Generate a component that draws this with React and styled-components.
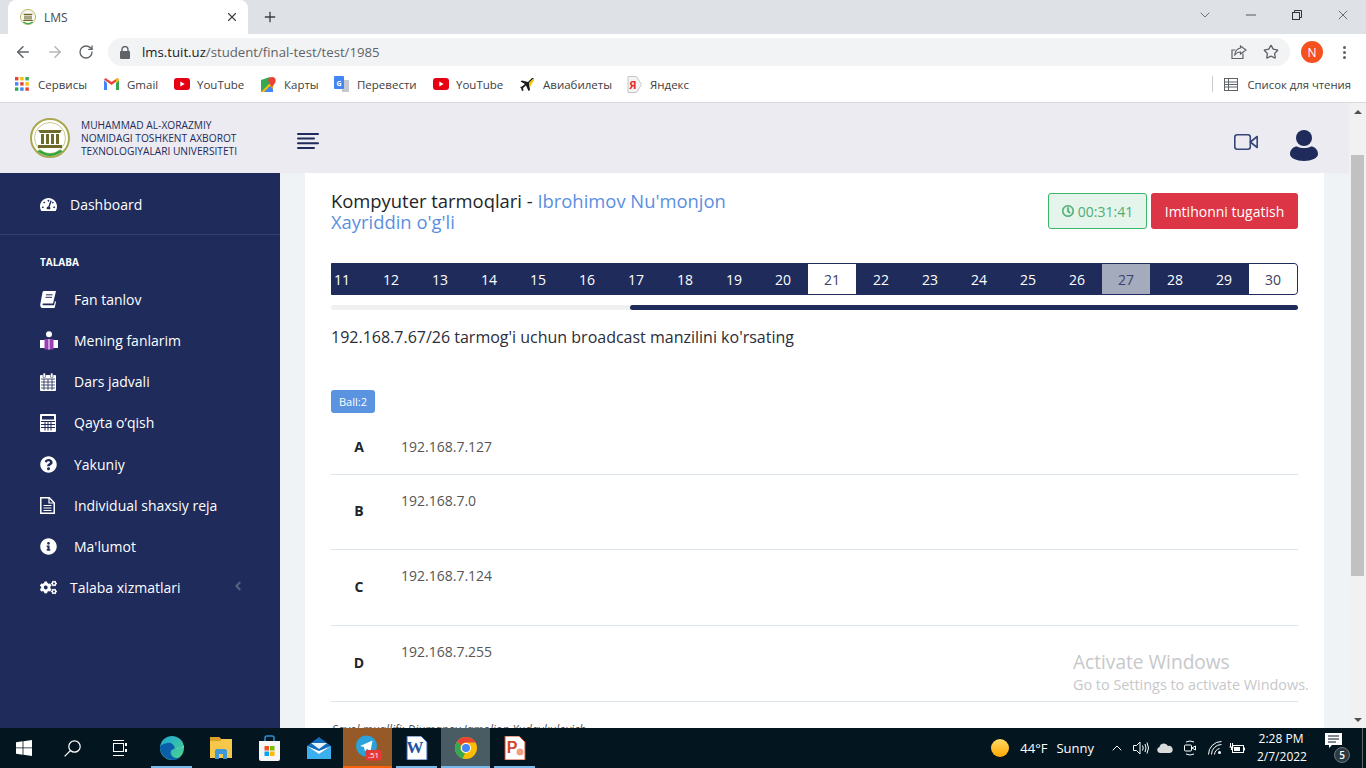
import React from "react";
import styled, { createGlobalStyle } from "styled-components";
import { FaTachometerAlt, FaQuestionCircle, FaInfoCircle, FaCogs, FaRegClock, FaAngleLeft } from "react-icons/fa";
import { ArrowLeft, ArrowRight, RotateCw, Star, X, Plus, Minus, ChevronDown, ChevronUp } from "lucide-react";

const navy = "#1e2b5b";

const GlobalStyle = createGlobalStyle`
  html, body {
    margin: 0;
    padding: 0;
    height: 768px;
    overflow: hidden;
    font-family: "Open Sans", "Noto Sans", sans-serif;
  }
  * {
    box-sizing: border-box;
  }
`;

const Screen = styled.div`
  width: 1366px;
  height: 768px;
  display: flex;
  flex-direction: column;
  position: relative;
  overflow: hidden;
  background: #fff;
`;

/* browser chrome */
const TabStrip = styled.div`
  height: 34px;
  flex: none;
  background: #dee1e6;
  display: flex;
  align-items: flex-end;
  padding-left: 8px;
  color: #3c4043;
`;

const Tab = styled.div`
  width: 240px;
  height: 34px;
  background: #fff;
  border-radius: 8px 8px 0 0;
  display: flex;
  align-items: center;
  padding: 0 9px 0 12px;
  font-size: 12px;
  gap: 8px;
`;

const TabTitle = styled.span`
  flex: 1;
  color: #45494d;
`;

const NewTab = styled.div`
  width: 44px;
  height: 34px;
  display: flex;
  align-items: center;
  justify-content: center;
`;

const WindowControls = styled.div`
  margin-left: auto;
  height: 34px;
  padding-bottom: 5px;
  display: flex;
  align-items: center;
  color: #333;
`;

const WindowButton = styled.div`
  width: 46px;
  display: flex;
  justify-content: center;
`;

const Toolbar = styled.div`
  height: 34px;
  flex: none;
  background: #fff;
  display: flex;
  align-items: center;
  padding: 2px 0 0 14px;
  color: #5f6368;
`;

const NavButton = styled.div`
  width: ${(p) => p.$width || 32}px;
  display: flex;
  color: ${(p) => p.$color || "#5f6368"};
`;

const Omnibox = styled.div`
  width: 1182px;
  height: 28px;
  background: #f1f3f4;
  border-radius: 14px;
  display: flex;
  align-items: center;
  padding: 0 11px 0 12px;
  font-size: 13.2px;
`;

const Url = styled.span`
  margin-left: 12px;
  color: #5f6368;
  flex: 1;
  b {
    font-weight: 400;
    color: #202124;
  }
`;

const OmniIcons = styled.div`
  display: flex;
  align-items: center;
  gap: 16px;
`;

const Avatar = styled.div`
  width: 22px;
  height: 22px;
  margin-left: 11px;
  border-radius: 50%;
  background: #f4511e;
  color: #fff;
  font-size: 12px;
  display: flex;
  align-items: center;
  justify-content: center;
`;

const Dots = styled.div`
  margin-left: 20px;
  display: flex;
  flex-direction: column;
  gap: 2px;
  i {
    width: 3px;
    height: 3px;
    border-radius: 50%;
    background: #5f6368;
  }
`;

const BookmarksBar = styled.div`
  height: 35px;
  flex: none;
  background: #fff;
  border-bottom: 1px solid #d9dadc;
  display: flex;
  align-items: center;
  padding: 0 0 2px 15px;
  font-size: 11.5px;
  color: #3c4043;
`;

const Bookmark = styled.div`
  width: ${(p) => p.$width}px;
  display: flex;
  align-items: center;
  gap: 7px;
  white-space: nowrap;
`;

const BookmarkIcon = styled.span`
  width: 16px;
  display: flex;
`;

const ReadingList = styled.div`
  margin-left: auto;
  height: 16px;
  border-left: 1px solid #c8cacd;
  padding: 0 15px 0 11px;
  display: flex;
  align-items: center;
  gap: 9px;
  font-size: 11.3px;
`;

/* page */
const Viewport = styled.div`
  flex: 1;
  min-height: 0;
  display: flex;
`;

const Page = styled.div`
  flex: 1;
  min-width: 0;
  display: flex;
  flex-direction: column;
`;

const Scrollbar = styled.div`
  width: 17px;
  flex: none;
  background: #f1f1f1;
  display: flex;
  flex-direction: column;
  align-items: center;
  padding: 7px 0 6px;
`;

const Arrow = styled.div`
  width: 0;
  height: 0;
  margin-top: ${(p) => (p.$up ? 0 : "auto")};
  border-left: 4px solid transparent;
  border-right: 4px solid transparent;
  border-${(p) => (p.$up ? "bottom" : "top")}: 4px solid #505050;
`;

const Thumb = styled.div`
  width: 13px;
  height: 421px;
  margin-top: 41px;
  background: #c1c1c1;
`;

const Header = styled.header`
  height: 70px;
  flex: none;
  background: #ebebf1;
  display: flex;
  align-items: center;
  padding: 0 31px 0 30px;
  color: ${navy};
`;

const Logo = styled.div`
  display: flex;
  align-items: center;
  gap: 11px;
  width: 267px;
`;

const LogoText = styled.div`
  font-size: 10.2px;
  font-weight: 500;
  line-height: 13px;
  color: ${navy};
  white-space: nowrap;
`;

const HeaderButton = styled.span`
  display: flex;
  margin-top: ${(p) => p.$down}px;
`;

const HeaderRight = styled.div`
  margin-left: auto;
  display: flex;
  align-items: center;
  gap: 32px;
`;

const Body = styled.div`
  flex: 1;
  min-height: 0;
  display: flex;
`;

const Sidebar = styled.nav`
  width: 280px;
  flex: none;
  background: ${navy};
  color: #fff;
  font-size: 14px;
`;

const DashboardRow = styled.div`
  height: 62px;
  border-bottom: 1px solid #363f6b;
  padding: 1px 40px 0;
  display: flex;
  align-items: center;
  gap: 13px;
`;

const SideLabel = styled.div`
  padding: 21px 40px 0;
  margin-bottom: 11px;
  font-size: 10px;
  line-height: 12px;
  font-weight: 700;
`;

const SideItem = styled.div`
  height: 41.15px;
  padding: 0 40px;
  display: flex;
  align-items: center;
  gap: ${(p) => (p.$narrow ? 13 : 0)}px;
`;

const SideIcon = styled.span`
  display: flex;
  width: ${(p) => (p.$narrow ? "auto" : "34px")};
  font-size: 17px;
`;

const SideCaret = styled.span`
  margin: -3px -5px 0 auto;
  display: flex;
  color: #56607f;
  font-size: 14px;
`;

const Content = styled.main`
  flex: 1;
  min-width: 0;
  background: #eff3f6;
  padding: 0 25px;
  overflow: hidden;
`;

const Card = styled.section`
  background: #fff;
  padding: 17px 26px 40px;
  color: #212529;
`;

const TestHead = styled.div`
  display: flex;
  justify-content: space-between;
  align-items: flex-start;
`;

const TestTitle = styled.h2`
  width: 410px;
  margin: 0;
  font-size: 18.4px;
  line-height: 21px;
  font-weight: 400;
  span {
    color: #5a8fdf;
  }
`;

const TestActions = styled.div`
  display: flex;
  gap: 4px;
  margin-top: 3px;
`;

const Timer = styled.div`
  width: 99px;
  height: 36px;
  background: #e6f5ec;
  border: 1px solid #38b866;
  border-radius: 3px;
  color: #4cae72;
  font-size: 14px;
  display: flex;
  align-items: center;
  justify-content: center;
  gap: 4px;
`;

const FinishButton = styled.button`
  width: 147px;
  height: 36px;
  border: 0;
  border-radius: 3px;
  background: #dc3545;
  color: #fff;
  font: 400 14px "Open Sans", sans-serif;
`;

const Strip = styled.div`
  margin-top: 31px;
  height: 32px;
  border: 1px solid ${navy};
  border-radius: 0 4px 4px 0;
  background: ${navy};
  overflow: hidden;
`;

const StripInner = styled.div`
  display: flex;
  gap: 1px;
  margin-left: -14px;
`;

const Cell = styled.div`
  width: 48px;
  height: 30px;
  flex: none;
  display: flex;
  align-items: center;
  justify-content: center;
  font-size: 14px;
  background: ${(p) => (p.$state === "open" ? "#fff" : p.$state === "flag" ? "#a4abbd" : navy)};
  color: ${(p) => (p.$state === "open" ? "#3a4260" : p.$state === "flag" ? "#39446e" : "#fff")};
`;

const Track = styled.div`
  margin-top: 10px;
  height: 5px;
  border-radius: 3px;
  background: #f0f0f0;
  display: flex;
  justify-content: flex-end;
`;

const TrackThumb = styled.div`
  width: 668px;
  border-radius: 3px;
  background: ${navy};
`;

const Question = styled.p`
  margin: 15px 0 0;
  font-size: 16px;
  line-height: 24px;
  color: #2a2d3a;
`;

const Badge = styled.div`
  margin-top: 41px;
  width: 44px;
  height: 23px;
  border-radius: 3px;
  background: #5a94e0;
  color: #fff;
  font-size: 11px;
  display: flex;
  align-items: center;
  justify-content: center;
`;

const Answers = styled.div`
  margin-top: 7px;
`;

const Answer = styled.div`
  height: ${(p) => p.$height}px;
  border-bottom: 1px solid #dee5ea;
  display: flex;
  font-size: 14px;
  line-height: 20px;
`;

const AnswerKey = styled.b`
  width: 70px;
  padding-right: 14px;
  align-self: center;
  margin-bottom: ${(p) => (p.$tall ? 2 : 0)}px;
  text-align: center;
  font-weight: 700;
  color: #212529;
`;

const AnswerText = styled.div`
  padding-top: ${(p) => (p.$tall ? 16 : 17)}px;
  color: #565656;
`;

const Author = styled.div`
  margin-top: 20px;
  margin-left: 1px;
  font-size: 11.7px;
  line-height: 14px;
  font-style: italic;
  color: #555;
`;

const Watermark = styled.div`
  position: absolute;
  left: 1073px;
  top: 650px;
  color: #c6c8ca;
  font-family: "Open Sans", sans-serif;
  pointer-events: none;
  div:first-child {
    font-size: 19.1px;
    line-height: 24px;
  }
  div:last-child {
    font-size: 14.4px;
    line-height: 22px;
    white-space: nowrap;
  }
`;

/* taskbar */
const Taskbar = styled.footer`
  height: 40px;
  flex: none;
  background: #03161f;
  color: #fff;
  display: flex;
  align-items: stretch;
`;

const SysButton = styled.div`
  width: 48px;
  display: flex;
  align-items: center;
  justify-content: center;
`;

const Pinned = styled.div`
  margin-left: 3px;
  display: flex;
`;

const Slot = styled.div`
  width: 49px;
  display: flex;
  align-items: center;
  justify-content: center;
  position: relative;
  background: ${(p) => p.$bg || "transparent"};
  &::after {
    content: "";
    position: absolute;
    bottom: 0;
    height: 2px;
    left: ${(p) => (p.$bar === "full" ? 0 : 4)}px;
    right: ${(p) => (p.$bar === "full" ? 0 : 4)}px;
    background: ${(p) => (p.$bar ? p.$barColor || "#76b9ed" : "transparent")};
  }
`;

const Tray = styled.div`
  margin-left: auto;
  display: flex;
  align-items: center;
  font-family: "Open Sans", sans-serif;
  font-size: 13px;
`;

const TrayItem = styled.span`
  display: flex;
  align-items: center;
  margin-left: ${(p) => p.$left || 0}px;
`;

const Clock = styled.div`
  width: 48px;
  margin: 0 20px 0 12px;
  text-align: center;
  font-size: 12px;
  line-height: 18px;
  white-space: nowrap;
`;

const Notify = styled.div`
  width: 25px;
  height: 30px;
  position: relative;
  margin-right: 12px;
`;

const NotifyCount = styled.span`
  position: absolute;
  right: 0;
  bottom: 0;
  width: 16px;
  height: 16px;
  border-radius: 50%;
  background: #2b3a41;
  border: 1px solid #6d7a80;
  color: #fff;
  font-size: 10px;
  font-weight: 600;
  display: flex;
  align-items: center;
  justify-content: center;
`;

const ShowDesktop = styled.div`
  width: 1px;
  height: 100%;
  margin-right: 3px;
  background: #5c6a70;
`;

/* drawings */
const LogoMark = ({ size }) => (
  <svg width={size} height={size} viewBox="0 0 40 40">
    <circle cx="20" cy="20" r="19" fill="#fff" stroke="#a9a84e" strokeWidth="2" />
    <circle cx="20" cy="20" r="15.5" fill="#fff" stroke="#c9c98c" strokeWidth="1" />
    <path d="M8 12h24l-2 3H10z" fill="#6d6a2a" />
    <path d="M11 16h3v10h-3zM16 16h3v10h-3zM21 16h3v10h-3zM26 16h3v10h-3z" fill="#6d6a2a" />
    <path d="M8 27h24v3H8z" fill="#6d6a2a" />
    <path d="M7 33q13 10 26 0l-3-1q-10 7-20 0z" fill="#2fa53a" />
  </svg>
);

const AppsGrid = () => {
  const colors = ["#ea4335", "#fbbc04", "#34a853", "#4285f4", "#ea4335", "#fbbc04", "#34a853", "#4285f4", "#ea4335"];
  return (
    <svg width="14" height="14" viewBox="0 0 14 14">
      {colors.map((c, i) => (
        <rect key={i} x={(i % 3) * 5.2} y={Math.floor(i / 3) * 5.2} width="3.4" height="3.4" fill={c} />
      ))}
    </svg>
  );
};

const GmailIcon = () => (
  <svg width="15" height="12" viewBox="0 0 15 12">
    <path d="M0 2v10h3V5z" fill="#4285f4" />
    <path d="M15 2v10h-3V5z" fill="#34a853" />
    <path d="M0 1.500 7.500 7 15 1.500 13.500 0 7.500 4 1.500 0z" fill="#ea4335" />
    <path d="M12 5 15 2 13.500 0 12 1z" fill="#fbbc04" />
  </svg>
);

const YouTubeIcon = () => (
  <svg width="16" height="12" viewBox="0 0 16 12">
    <rect width="16" height="12" rx="3" fill="#e60012" />
    <path d="M6.300 3.400v5.200L10.700 6z" fill="#fff" />
  </svg>
);

const MapsIcon = () => (
  <svg width="15" height="15" viewBox="0 0 15 15">
    <path d="M0 3 9 0v15H0z" fill="#35a853" />
    <path d="M0 15 9 6l3 3v6z" fill="#fbbc04" />
    <path d="M3 15 9 9l3 3v3z" fill="#4285f4" />
    <path d="M11 0a3.700 3.700 0 0 1 3.700 3.700C14.700 6 12.500 7.500 11 10.500 9.500 7.500 7.300 6 7.300 3.700A3.700 3.700 0 0 1 11 0z" fill="#ea4335" />
  </svg>
);

const TranslateIcon = () => (
  <svg width="16" height="17" viewBox="0 0 16 17">
    <path d="M7 4h8v12H8z" fill="#c5c9cf" />
    <rect width="10" height="13" rx="1" fill="#4285f4" />
    <text x="5" y="9.500" fontSize="7" fontWeight="700" fill="#fff" textAnchor="middle" fontFamily="Open Sans">G</text>
  </svg>
);

const PlaneIcon = () => (
  <svg width="15" height="15" viewBox="0 0 15 15">
    <path d="M14 1 9 6l1 7-1.500 1L6 8.500 3 11l.5 2.500L2 14l-1-3-1-1 2-.500L5 7 .5 4.500 2 3.500l6 1.500 4-4z" fill="#1c1c1c" />
    <path d="M14 1 9 6l1 4 4-7z" fill="#f2c200" />
  </svg>
);

const YandexIcon = () => (
  <svg width="15" height="17" viewBox="0 0 15 17">
    <path d="M1 .5h8.500L14.500 8.500l-5 8H1z" fill="#f4f4f4" stroke="#c6c6c6" />
    <text x="6" y="13" fontSize="11" fontWeight="700" fill="#e32b2b" textAnchor="middle" fontFamily="Open Sans">Я</text>
  </svg>
);

const ShareIcon = () => (
  <svg width="16" height="15" viewBox="0 0 16 15" fill="none" stroke="#5f6368" strokeWidth="1.200">
    <path d="M12 8.500V13.500H1V5h3.500" />
    <path d="M9.500 1 15 5l-5.500 4V7C7 7 5 8 3.500 10.500 4 7 6 3.500 9.500 3z" />
  </svg>
);

const LockIcon = () => (
  <svg width="10" height="13" viewBox="0 0 10 13">
    <path d="M2 5V3.500a3 3 0 0 1 6 0V5" fill="none" stroke="#5f6368" strokeWidth="1.400" />
    <rect y="5" width="10" height="8" rx="1" fill="#5f6368" />
  </svg>
);

const ReadingIcon = () => (
  <svg width="14" height="13" viewBox="0 0 14 13" fill="none" stroke="#5f6368">
    <rect x=".5" y=".5" width="13" height="12" />
    <path d="M.5 4h13M.5 6.500h13M.5 9h13M4.500 .5v12" />
  </svg>
);

const RestoreIcon = () => (
  <svg width="10" height="10" viewBox="0 0 10 10" fill="none" stroke="#333">
    <rect x=".5" y="2.500" width="7" height="7" />
    <path d="M2.500 2.500v-2h7v7h-2" />
  </svg>
);

const MenuIcon = () => (
  <svg width="22" height="16" viewBox="0 0 22 16" fill={navy}>
    <rect width="22" height="2" rx="1" />
    <rect y="4.600" width="18" height="2" rx="1" />
    <rect y="9.300" width="22" height="2" rx="1" />
    <rect y="14" width="18" height="2" rx="1" />
  </svg>
);

const VideoIcon = () => (
  <svg width="24" height="16" viewBox="0 0 24 16" fill="none" stroke="#36467a" strokeWidth="1.600" strokeLinejoin="round">
    <rect x=".8" y=".8" width="15.500" height="14.400" rx="2.500" />
    <path d="M16.300 8 23.200 2.500v11z" />
  </svg>
);

const UserIcon = () => (
  <svg width="28" height="31" viewBox="0 0 28 31" fill={navy}>
    <circle cx="14" cy="8" r="8" />
    <path d="M0 24c0-5 4-7.500 7-7.500 2 1 4.500 1.600 7 1.600s5-.6 7-1.600c3 0 7 2.500 7 7.500 0 4-6.500 7-14 7S0 28 0 24z" />
  </svg>
);

const BookIcon = () => (
  <svg width="16" height="17" viewBox="0 0 16 17" fill="#fff">
    <path d="M4 0h12l-3 12.500H3.500c-1.200 0-1.400 1.800 0 1.800H14l1-4.300 1 1-1.500 6.500H3C1 17 0 15.300 .3 13.300L2.400 2C2.600 .8 3 0 4 0z" />
    <path d="M6 3.800h6.500M5.500 6.300H12" stroke={navy} fill="none" />
  </svg>
);

const ReaderIcon = () => (
  <svg width="18" height="19" viewBox="0 0 18 19">
    <circle cx="9" cy="3.300" r="3" fill="#fff" />
    <path d="M0 9h4c2 0 4 .5 5 1.500C10 9.500 12 9 14 9h4v8h-4c-2 0-4 .5-5 1.500C8 17.500 6 17 4 17H0z" fill="#fff" />
    <path d="M4.500 8h9v10.500h-9z" fill="#9a3fb5" />
    <path d="M8.500 8h1v10.500h-1z" fill="#fff" />
  </svg>
);

const CalendarIcon = () => (
  <svg width="16" height="18" viewBox="0 0 16 18">
    <rect y="2" width="16" height="16" rx="1" fill="#fff" />
    <rect x="3" y="0" width="2.500" height="4.500" rx="1" fill="#fff" stroke={navy} strokeWidth=".6" />
    <rect x="10.500" y="0" width="2.500" height="4.500" rx="1" fill="#fff" stroke={navy} strokeWidth=".6" />
    <path d="M1 6h14M1 9h14M1 12h14M1 15h14M4 6v11M8 6v11M12 6v11" stroke={navy} strokeWidth=".8" fill="none" />
  </svg>
);

const CalculatorIcon = () => (
  <svg width="16" height="18" viewBox="0 0 16 18">
    <rect width="16" height="18" rx="1" fill="#fff" />
    <rect x="2" y="2" width="12" height="3.500" fill={navy} />
    <path d="M1 7.500h14M1 10.500h14M1 13.500h14M5 7.500v9M8 7.500v9M11 7.500v9" stroke={navy} fill="none" />
  </svg>
);

const FileIcon = () => (
  <svg width="15" height="17" viewBox="0 0 15 17" fill="none" stroke="#fff" strokeWidth="1.500">
    <path d="M.8 .8h8.500l4.900 4.900v10.500H.8z" />
    <path d="M9 1v5h5" strokeWidth="1.200" />
    <path d="M3.500 8.500h8M3.500 11h8M3.500 13.500h8" strokeWidth="1.200" />
  </svg>
);

const WindowsLogo = () => (
  <svg width="16" height="16" viewBox="0 0 16 16" fill="#fff">
    <path d="M0 2.300 6.600 1.300v6.200H0zM7.400 1.200 16 0v7.500H7.400zM0 8.300h6.600v6.400L0 13.700zM7.400 8.300H16V16l-8.600-1.200z" />
  </svg>
);

const SearchIcon = () => (
  <svg width="17" height="17" viewBox="0 0 17 17" fill="none" stroke="#fff" strokeWidth="1.200">
    <circle cx="10.500" cy="6.500" r="5.700" />
    <path d="M6.500 10.500 .6 16.400" />
  </svg>
);

const TaskViewIcon = () => (
  <svg width="16" height="16" viewBox="0 0 16 16" fill="none" stroke="#fff">
    <rect x="1.500" y="3.500" width="10" height="8" />
    <path d="M1 .5h11M1 15.500h11" />
    <path d="M14 3v3M14 9v3" strokeWidth="2" />
  </svg>
);

const EdgeIcon = () => (
  <svg width="24" height="24" viewBox="0 0 24 24">
    <defs>
      <linearGradient id="edgeA" x1="0" y1="0" x2="1" y2="1">
        <stop offset="0" stopColor="#1ba5d8" />
        <stop offset="1" stopColor="#4fd68a" />
      </linearGradient>
    </defs>
    <circle cx="12" cy="12" r="12" fill="url(#edgeA)" />
    <path d="M0 12C1 20 7 24 13 24c3 0 6-1 8-3-4 2-9 1-10-3-1-3 1-5 4-5.500C14 8 10 6 7 7 3 8 0 9 0 12z" fill="#0b5ea8" />
    <path d="M21 12c3 0 3-2 3-3-1 3-5 4-9 3.500 2 .5 4 .5 6-.5z" fill="#fff" opacity=".5" />
  </svg>
);

const ExplorerIcon = () => (
  <svg width="22" height="24" viewBox="0 0 22 24">
    <path d="M0 1h9l2 2h11v19H0z" fill="#f5c84c" />
    <path d="M0 1h9l2 2v2H0z" fill="#d9a02a" />
    <path d="M5 23v-8c0-1 1-2 2-2h8c1 0 2 1 2 2v8h-4v-5H9v5z" fill="#3c9ad8" />
  </svg>
);

const StoreIcon = () => (
  <svg width="23" height="26" viewBox="0 0 23 26">
    <path d="M7 7V3a2 2 0 0 1 2-2h5a2 2 0 0 1 2 2v4" fill="none" stroke="#2d8fd8" strokeWidth="1.500" />
    <path d="M1 6h21v18a2 2 0 0 1-2 2H3a2 2 0 0 1-2-2z" fill="#f6f6f6" />
    <rect x="6.500" y="11" width="4.500" height="4.500" fill="#f25022" />
    <rect x="12" y="11" width="4.500" height="4.500" fill="#7fba00" />
    <rect x="6.500" y="16.500" width="4.500" height="4.500" fill="#00a4ef" />
    <rect x="12" y="16.500" width="4.500" height="4.500" fill="#ffb900" />
  </svg>
);

const MailIcon = () => (
  <svg width="24" height="22" viewBox="0 0 24 22">
    <path d="M0 9 12 0l12 9v13H0z" fill="#0f6cbd" />
    <path d="M0 9v13h24V9L12 17z" fill="#3ab0ef" />
    <path d="M0 9 12 14 24 9 12 17z" fill="#fff" />
    <path d="M4 6h16l-8 6z" fill="#e8f4fc" />
  </svg>
);

const TelegramIcon = () => (
  <svg width="26" height="26" viewBox="0 0 26 26" style={{ marginLeft: 3 }}>
    <circle cx="10.500" cy="11" r="10.500" fill="#2aa3dc" />
    <path d="M4 11 16.500 5.500l-2 11-3.500-2.700-2 2.700-1-4.500z" fill="#fff" />
    <rect x="9.500" y="15" width="16" height="10.500" rx="1.500" fill="#e53935" />
    <text x="17.500" y="23" fontSize="8" fill="#fff" textAnchor="middle" fontFamily="Open Sans">.51</text>
  </svg>
);

const WordIcon = () => (
  <svg width="22" height="24" viewBox="0 0 22 24">
    <path d="M1 0h14l6 6v18H1z" fill="#fff" stroke="#2a5db0" />
    <text x="9" y="17" fontSize="17" fontWeight="700" fill="#1f4f9e" textAnchor="middle" fontFamily="Liberation Serif">W</text>
  </svg>
);

const ChromeIcon = () => (
  <svg width="22" height="22" viewBox="0 0 22 22">
    <circle cx="11" cy="11" r="11" fill="#fbbc04" />
    <path d="M11 0a11 11 0 0 1 9.500 5.500H11a5.500 5.500 0 0 0-5 3L2.200 4.500A11 11 0 0 1 11 0z" fill="#ea4335" />
    <path d="M2.200 4.500 6 8.500a5.500 5.500 0 0 0 4 7.900L7.500 21.500A11 11 0 0 1 2.200 4.500z" fill="#34a853" />
    <circle cx="11" cy="11" r="5" fill="#fff" />
    <circle cx="11" cy="11" r="4" fill="#4285f4" />
  </svg>
);

const PowerPointIcon = () => (
  <svg width="22" height="24" viewBox="0 0 22 24">
    <path d="M1 0h14l6 6v18H1z" fill="#fff" stroke="#d24726" />
    <text x="8" y="17" fontSize="16" fontWeight="700" fill="#d24726" textAnchor="middle" fontFamily="Liberation Sans">P</text>
    <circle cx="16" cy="16" r="3.500" fill="#f0a080" />
  </svg>
);

const SunIcon = () => (
  <svg width="18" height="18" viewBox="0 0 18 18">
    <defs>
      <linearGradient id="sun" x1="0" y1="0" x2="0" y2="1">
        <stop offset="0" stopColor="#ffd966" />
        <stop offset="1" stopColor="#ffa800" />
      </linearGradient>
    </defs>
    <circle cx="9" cy="9" r="9" fill="url(#sun)" />
  </svg>
);

const SpeakerIcon = () => (
  <svg width="16" height="14" viewBox="0 0 16 14" fill="none" stroke="#fff">
    <path d="M.5 4.500h3L7 1v12L3.500 9.500h-3z" />
    <path d="M9.500 4.500q1.500 2.500 0 5M12 3q2 4 0 8M14 1.500q3 5.500 0 11" />
  </svg>
);

const CloudIcon = () => (
  <svg width="16" height="10" viewBox="0 0 16 10">
    <path d="M3 10a3 3 0 0 1-.5-5.900A4.500 4.500 0 0 1 11 3a3.500 3.500 0 0 1 2 7z" fill="#d8dadb" />
  </svg>
);

const MeetIcon = () => (
  <svg width="12" height="16" viewBox="0 0 12 16" fill="none" stroke="#fff">
    <path d="M2 2q4-2 8 0M2 14q4 2 8 0" />
    <rect x=".5" y="5" width="7" height="6" rx="1" />
    <path d="M8 8l3.500-2v4z" />
  </svg>
);

const WifiIcon = () => (
  <svg width="14" height="14" viewBox="0 0 14 14" fill="none" stroke="#fff">
    <path d="M.5 13.500A13 13 0 0 1 13.500 .5M3.500 13.500a10 10 0 0 1 10-10M6.500 13.500a7 7 0 0 1 5-6" />
    <circle cx="11.500" cy="11.500" r="1.500" fill="#fff" stroke="none" />
  </svg>
);

const BatteryIcon = () => (
  <svg width="16" height="11" viewBox="0 0 16 11" fill="none" stroke="#fff">
    <rect x="3.500" y="2.500" width="11" height="7" />
    <path d="M15.500 4.500v3" />
    <rect x="5" y="4" width="6" height="4" fill="#fff" stroke="none" />
    <path d="M.5 4h4M1.500 0v4M3.500 0v4M2.500 4v3" />
  </svg>
);

const ChatIcon = () => (
  <svg width="17" height="16" viewBox="0 0 17 16" fill="#fff">
    <path d="M0 0h17v12H7l-3 3v-3H0z" />
    <path d="M3 3h11M3 6h11M3 9h8" stroke="#03161f" />
  </svg>
);

const bookmarks = [
  { icon: <AppsGrid />, label: "Сервисы", width: 89 },
  { icon: <GmailIcon />, label: "Gmail", width: 70 },
  { icon: <YouTubeIcon />, label: "YouTube", width: 87 },
  { icon: <MapsIcon />, label: "Карты", width: 73 },
  { icon: <TranslateIcon />, label: "Перевести", width: 99 },
  { icon: <YouTubeIcon />, label: "YouTube", width: 87 },
  { icon: <PlaneIcon />, label: "Авиабилеты", width: 107 },
  { icon: <YandexIcon />, label: "Яндекс", width: 70 },
];

const menu = [
  { icon: <BookIcon />, label: "Fan tanlov" },
  { icon: <ReaderIcon />, label: "Mening fanlarim" },
  { icon: <CalendarIcon />, label: "Dars jadvali" },
  { icon: <CalculatorIcon />, label: "Qayta o’qish" },
  { icon: <FaQuestionCircle />, label: "Yakuniy" },
  { icon: <FileIcon />, label: "Individual shaxsiy reja" },
  { icon: <FaInfoCircle />, label: "Ma'lumot" },
];

const cells = Array.from({ length: 20 }, (_, i) => i + 11);
const cellState = { 21: "open", 27: "flag", 30: "open" };

const answers = [
  { key: "A", text: "192.168.7.127", height: 55 },
  { key: "B", text: "192.168.7.0", height: 75, tall: true },
  { key: "C", text: "192.168.7.124", height: 76, tall: true },
  { key: "D", text: "192.168.7.255", height: 76, tall: true },
];

const pinned = [
  { icon: <EdgeIcon />, bar: true },
  { icon: <ExplorerIcon /> },
  { icon: <StoreIcon /> },
  { icon: <MailIcon /> },
  { icon: <TelegramIcon />, bg: "#965a28", bar: "full", barColor: "#f7630c" },
  { icon: <WordIcon />, bar: true },
  { icon: <ChromeIcon />, bg: "#4a5c63", bar: "full" },
  { icon: <PowerPointIcon />, bar: true },
];

const trayIcons = [
  { icon: <ChevronUp size={16} strokeWidth={1.5} />, left: 15 },
  { icon: <SpeakerIcon />, left: 8 },
  { icon: <CloudIcon />, left: 8 },
  { icon: <MeetIcon />, left: 11 },
  { icon: <WifiIcon />, left: 12 },
  { icon: <BatteryIcon />, left: 7 },
];

export default function App() {
  return (
    <Screen>
      <GlobalStyle />
      <TabStrip>
        <Tab>
          <LogoMark size={16} />
          <TabTitle>LMS</TabTitle>
          <X size={14} strokeWidth={2} />
        </Tab>
        <NewTab>
          <Plus size={16} strokeWidth={2} />
        </NewTab>
        <WindowControls>
          <WindowButton>
            <ChevronDown size={16} strokeWidth={1} />
          </WindowButton>
          <WindowButton>
            <Minus size={16} strokeWidth={1.2} />
          </WindowButton>
          <WindowButton>
            <RestoreIcon />
          </WindowButton>
          <WindowButton>
            <X size={16} strokeWidth={1} />
          </WindowButton>
        </WindowControls>
      </TabStrip>

      <Toolbar>
        <NavButton>
          <ArrowLeft size={18} />
        </NavButton>
        <NavButton $color="#b4b6b9">
          <ArrowRight size={18} />
        </NavButton>
        <NavButton $width={30}>
          <RotateCw size={16} />
        </NavButton>
        <Omnibox>
          <LockIcon />
          <Url>
            <b>lms.tuit.uz</b>/student/final-test/test/1985
          </Url>
          <OmniIcons>
            <ShareIcon />
            <Star size={16} />
          </OmniIcons>
        </Omnibox>
        <Avatar>N</Avatar>
        <Dots>
          <i />
          <i />
          <i />
        </Dots>
      </Toolbar>

      <BookmarksBar>
        {bookmarks.map((b, i) => (
          <Bookmark key={i} $width={b.width}>
            <BookmarkIcon>{b.icon}</BookmarkIcon>
            {b.label}
          </Bookmark>
        ))}
        <ReadingList>
          <ReadingIcon />
          Список для чтения
        </ReadingList>
      </BookmarksBar>

      <Viewport>
        <Page>
          <Header>
            <Logo>
              <LogoMark size={40} />
              <LogoText>
                MUHAMMAD AL-XORAZMIY
                <br />
                NOMIDAGI TOSHKENT AXBOROT
                <br />
                TEXNOLOGIYALARI UNIVERSITETI
              </LogoText>
            </Logo>
            <HeaderButton $down={6}>
              <MenuIcon />
            </HeaderButton>
            <HeaderRight>
              <HeaderButton $down={8}>
                <VideoIcon />
              </HeaderButton>
              <HeaderButton $down={15}>
                <UserIcon />
              </HeaderButton>
            </HeaderRight>
          </Header>
          <Body>
            <Sidebar>
              <DashboardRow>
                <SideIcon $narrow>
                  <FaTachometerAlt />
                </SideIcon>
                Dashboard
              </DashboardRow>
              <SideLabel>TALABA</SideLabel>
              {menu.map((m) => (
                <SideItem key={m.label}>
                  <SideIcon>{m.icon}</SideIcon>
                  {m.label}
                </SideItem>
              ))}
              <SideItem $narrow>
                <SideIcon $narrow>
                  <FaCogs />
                </SideIcon>
                Talaba xizmatlari
                <SideCaret>
                  <FaAngleLeft />
                </SideCaret>
              </SideItem>
            </Sidebar>
            <Content>
              <Card>
                <TestHead>
                  <TestTitle>
                    Kompyuter tarmoqlari - <span>Ibrohimov Nu'monjon Xayriddin o'g'li</span>
                  </TestTitle>
                  <TestActions>
                    <Timer>
                      <FaRegClock size={12} stroke="currentColor" strokeWidth={24} />
                      00:31:41
                    </Timer>
                    <FinishButton>Imtihonni tugatish</FinishButton>
                  </TestActions>
                </TestHead>
                <Strip>
                  <StripInner>
                    {cells.map((n) => (
                      <Cell key={n} $state={cellState[n]}>
                        {n}
                      </Cell>
                    ))}
                  </StripInner>
                </Strip>
                <Track>
                  <TrackThumb />
                </Track>
                <Question>192.168.7.67/26 tarmog'i uchun broadcast manzilini ko'rsating</Question>
                <Badge>Ball:2</Badge>
                <Answers>
                  {answers.map((a) => (
                    <Answer key={a.key} $height={a.height}>
                      <AnswerKey $tall={a.tall}>{a.key}</AnswerKey>
                      <AnswerText $tall={a.tall}>{a.text}</AnswerText>
                    </Answer>
                  ))}
                </Answers>
                <Author>Savol muallifi: Djumanov Jamoljon Xudaykulovich</Author>
              </Card>
            </Content>
          </Body>
        </Page>
        <Scrollbar>
          <Arrow $up />
          <Thumb />
          <Arrow />
        </Scrollbar>
      </Viewport>

      <Taskbar>
        <SysButton>
          <WindowsLogo />
        </SysButton>
        <SysButton>
          <SearchIcon />
        </SysButton>
        <SysButton>
          <TaskViewIcon />
        </SysButton>
        <Pinned>
          {pinned.map((p, i) => (
            <Slot key={i} $bg={p.bg} $bar={p.bar} $barColor={p.barColor}>
              {p.icon}
            </Slot>
          ))}
        </Pinned>
        <Tray>
          <TrayItem>
            <SunIcon />
          </TrayItem>
          <TrayItem $left={11}>44°F</TrayItem>
          <TrayItem $left={9}>Sunny</TrayItem>
          {trayIcons.map((t, i) => (
            <TrayItem key={i} $left={t.left}>
              {t.icon}
            </TrayItem>
          ))}
          <Clock>
            2:28 PM
            <br />
            2/7/2022
          </Clock>
          <Notify>
            <ChatIcon />
            <NotifyCount>5</NotifyCount>
          </Notify>
          <ShowDesktop />
        </Tray>
      </Taskbar>

      <Watermark>
        <div>Activate Windows</div>
        <div>Go to Settings to activate Windows.</div>
      </Watermark>
    </Screen>
  );
}
